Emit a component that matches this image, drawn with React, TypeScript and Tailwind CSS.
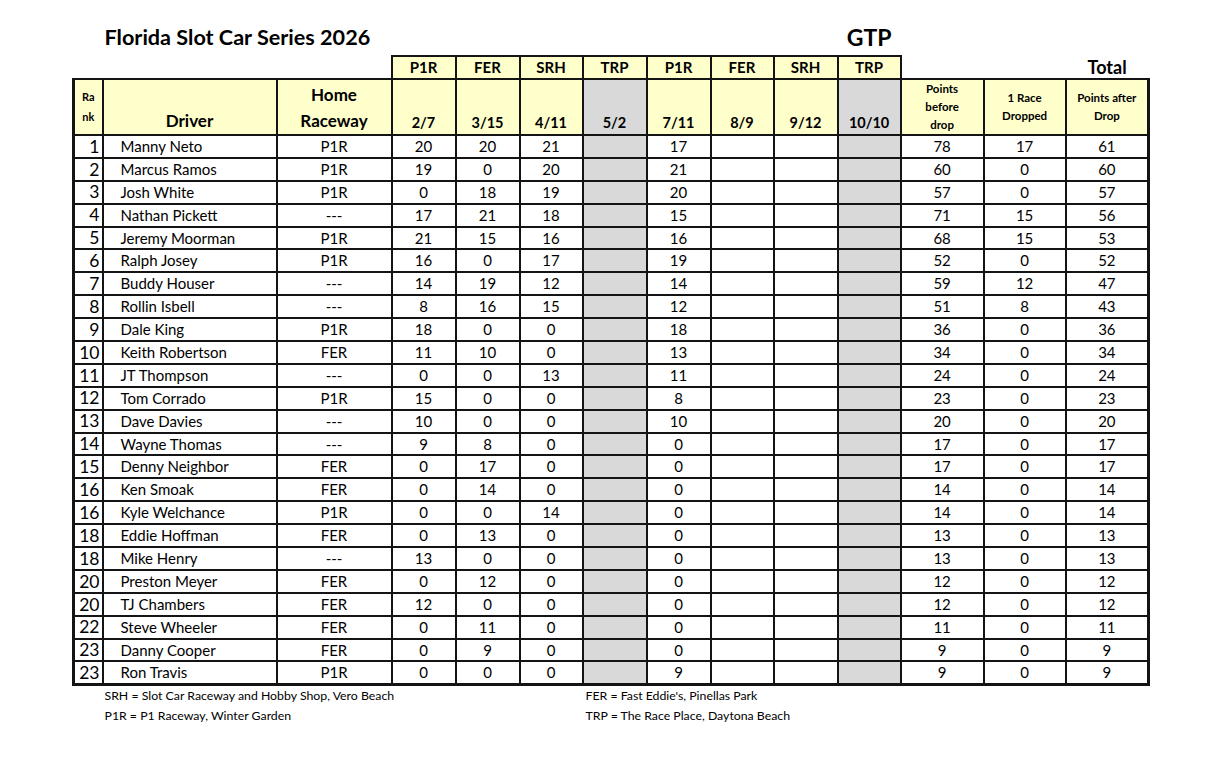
import React from 'react';

type Row = {
  rank: number;
  name: string;
  home: string;
  r: (number | null)[];
  before: number;
  dropped: number;
  after: number;
};

const rows: Row[] = [
  { rank: 1, name: 'Manny Neto', home: 'P1R', r: [20, 20, 21, null, 17, null, null, null], before: 78, dropped: 17, after: 61 },
  { rank: 2, name: 'Marcus Ramos', home: 'P1R', r: [19, 0, 20, null, 21, null, null, null], before: 60, dropped: 0, after: 60 },
  { rank: 3, name: 'Josh White', home: 'P1R', r: [0, 18, 19, null, 20, null, null, null], before: 57, dropped: 0, after: 57 },
  { rank: 4, name: 'Nathan Pickett', home: '---', r: [17, 21, 18, null, 15, null, null, null], before: 71, dropped: 15, after: 56 },
  { rank: 5, name: 'Jeremy Moorman', home: 'P1R', r: [21, 15, 16, null, 16, null, null, null], before: 68, dropped: 15, after: 53 },
  { rank: 6, name: 'Ralph Josey', home: 'P1R', r: [16, 0, 17, null, 19, null, null, null], before: 52, dropped: 0, after: 52 },
  { rank: 7, name: 'Buddy Houser', home: '---', r: [14, 19, 12, null, 14, null, null, null], before: 59, dropped: 12, after: 47 },
  { rank: 8, name: 'Rollin Isbell', home: '---', r: [8, 16, 15, null, 12, null, null, null], before: 51, dropped: 8, after: 43 },
  { rank: 9, name: 'Dale King', home: 'P1R', r: [18, 0, 0, null, 18, null, null, null], before: 36, dropped: 0, after: 36 },
  { rank: 10, name: 'Keith Robertson', home: 'FER', r: [11, 10, 0, null, 13, null, null, null], before: 34, dropped: 0, after: 34 },
  { rank: 11, name: 'JT Thompson', home: '---', r: [0, 0, 13, null, 11, null, null, null], before: 24, dropped: 0, after: 24 },
  { rank: 12, name: 'Tom Corrado', home: 'P1R', r: [15, 0, 0, null, 8, null, null, null], before: 23, dropped: 0, after: 23 },
  { rank: 13, name: 'Dave Davies', home: '---', r: [10, 0, 0, null, 10, null, null, null], before: 20, dropped: 0, after: 20 },
  { rank: 14, name: 'Wayne Thomas', home: '---', r: [9, 8, 0, null, 0, null, null, null], before: 17, dropped: 0, after: 17 },
  { rank: 15, name: 'Denny Neighbor', home: 'FER', r: [0, 17, 0, null, 0, null, null, null], before: 17, dropped: 0, after: 17 },
  { rank: 16, name: 'Ken Smoak', home: 'FER', r: [0, 14, 0, null, 0, null, null, null], before: 14, dropped: 0, after: 14 },
  { rank: 16, name: 'Kyle Welchance', home: 'P1R', r: [0, 0, 14, null, 0, null, null, null], before: 14, dropped: 0, after: 14 },
  { rank: 18, name: 'Eddie Hoffman', home: 'FER', r: [0, 13, 0, null, 0, null, null, null], before: 13, dropped: 0, after: 13 },
  { rank: 18, name: 'Mike Henry', home: '---', r: [13, 0, 0, null, 0, null, null, null], before: 13, dropped: 0, after: 13 },
  { rank: 20, name: 'Preston Meyer', home: 'FER', r: [0, 12, 0, null, 0, null, null, null], before: 12, dropped: 0, after: 12 },
  { rank: 20, name: 'TJ Chambers', home: 'FER', r: [12, 0, 0, null, 0, null, null, null], before: 12, dropped: 0, after: 12 },
  { rank: 22, name: 'Steve Wheeler', home: 'FER', r: [0, 11, 0, null, 0, null, null, null], before: 11, dropped: 0, after: 11 },
  { rank: 23, name: 'Danny Cooper', home: 'FER', r: [0, 9, 0, null, 0, null, null, null], before: 9, dropped: 0, after: 9 },
  { rank: 23, name: 'Ron Travis', home: 'P1R', r: [0, 0, 0, null, 9, null, null, null], before: 9, dropped: 0, after: 9 },
];

const tracks = ['P1R', 'FER', 'SRH', 'TRP', 'P1R', 'FER', 'SRH', 'TRP'];
const dates = ['2/7', '3/15', '4/11', '5/2', '7/11', '8/9', '9/12', '10/10'];
const widths = [29, 174, 115, 64, 64, 63, 64, 64, 63, 64, 63, 83, 82, 83];

// gray columns = the TRP rounds (index 3 and 7)
const isGray = (i: number) => i === 3 || i === 7;

const cell = 'border-2 border-[#141414] p-0';

const App = () => {
  return (
    <div
      className="w-[1224px] h-[762px] bg-white text-black overflow-hidden pt-[20px] pl-[72px]"
      style={{ fontFamily: 'Lato, "Liberation Sans", sans-serif' }}
    >
      <table className="table-fixed border-collapse w-[1077px]">
        <colgroup>
          {widths.map((w, i) => (
            <col key={i} style={{ width: w }} />
          ))}
        </colgroup>
        <tbody>
          <tr className="h-[36px]">
            <td />
            <td colSpan={9} className="align-middle pl-[2px] whitespace-nowrap text-[21.6px] font-bold">
              Florida Slot Car Series 2026
            </td>
            <td className="text-center align-middle text-[23px] font-bold">GTP</td>
            <td colSpan={3} />
          </tr>
          <tr className="h-[23px]">
            <td colSpan={3} />
            {tracks.map((t, i) => (
              <td key={i} className={`${cell} bg-[#ffffcc] text-center text-[15px] font-bold leading-none`}>
                {t}
              </td>
            ))}
            <td colSpan={2} />
            <td className="text-center text-[18px] font-bold leading-none">Total</td>
          </tr>
          <tr className="h-[55px]">
            <td className={`${cell} border-l-[3px] bg-[#ffffcc] text-center align-middle text-[11px] font-bold leading-[20px]`}>
              Ra
              <br />
              nk
            </td>
            <td className={`${cell} bg-[#ffffcc] text-center align-bottom text-[17px] font-bold leading-[26px]`}>
              Driver
            </td>
            <td className={`${cell} bg-[#ffffcc] text-center align-bottom text-[17px] font-bold leading-[26px]`}>
              Home
              <br />
              Raceway
            </td>
            {dates.map((d, i) => (
              <td
                key={i}
                className={`${cell} ${isGray(i) ? 'bg-[#d9d9d9]' : 'bg-[#ffffcc]'} text-center align-bottom text-[14.5px] font-bold leading-[22px]`}
              >
                {d}
              </td>
            ))}
            <td className={`${cell} bg-[#ffffcc] text-center align-middle text-[11.5px] font-bold leading-[18px]`}>
              Points
              <br />
              before
              <br />
              drop
            </td>
            <td className={`${cell} bg-[#ffffcc] text-center align-middle text-[11.5px] font-bold leading-[18px]`}>
              1 Race
              <br />
              Dropped
            </td>
            <td className={`${cell} border-r-[3px] bg-[#ffffcc] text-center align-middle text-[11.5px] font-bold leading-[18px]`}>
              Points after
              <br />
              Drop
            </td>
          </tr>
          {rows.map((row, ri) => {
            const last = ri === rows.length - 1;
            const b = last ? 'border-b-[3px]' : '';
            return (
              <tr key={ri} className="h-[22.9px] text-[15px] leading-none">
                <td className={`${cell} ${b} border-l-[3px] text-right pr-[2px] text-[17.5px]`}>{row.rank}</td>
                <td className={`${cell} ${b} text-left pl-[17px] whitespace-nowrap`}>{row.name}</td>
                <td className={`${cell} ${b} text-center`}>{row.home}</td>
                {row.r.map((v, i) => (
                  <td key={i} className={`${cell} ${b} text-center ${isGray(i) ? 'bg-[#d9d9d9]' : ''}`}>
                    {v ?? ''}
                  </td>
                ))}
                <td className={`${cell} ${b} text-center`}>{row.before}</td>
                <td className={`${cell} ${b} text-center`}>{row.dropped}</td>
                <td className={`${cell} ${b} border-r-[3px] text-center`}>{row.after}</td>
              </tr>
            );
          })}
          <tr className="h-[22px] text-[12.3px] leading-none">
            <td />
            <td colSpan={5} className="pl-[2px] align-middle whitespace-nowrap">
              SRH = Slot Car Raceway and Hobby Shop, Vero Beach
            </td>
            <td colSpan={8} className="pl-[3px] align-middle whitespace-nowrap">
              FER = Fast Eddie&apos;s, Pinellas Park
            </td>
          </tr>
          <tr className="h-[20px] text-[12.3px] leading-none">
            <td />
            <td colSpan={5} className="pl-[2px] align-middle whitespace-nowrap">
              P1R = P1 Raceway, Winter Garden
            </td>
            <td colSpan={8} className="pl-[3px] align-middle whitespace-nowrap">
              TRP = The Race Place, Daytona Beach
            </td>
          </tr>
        </tbody>
      </table>
    </div>
  );
};

export default App;
